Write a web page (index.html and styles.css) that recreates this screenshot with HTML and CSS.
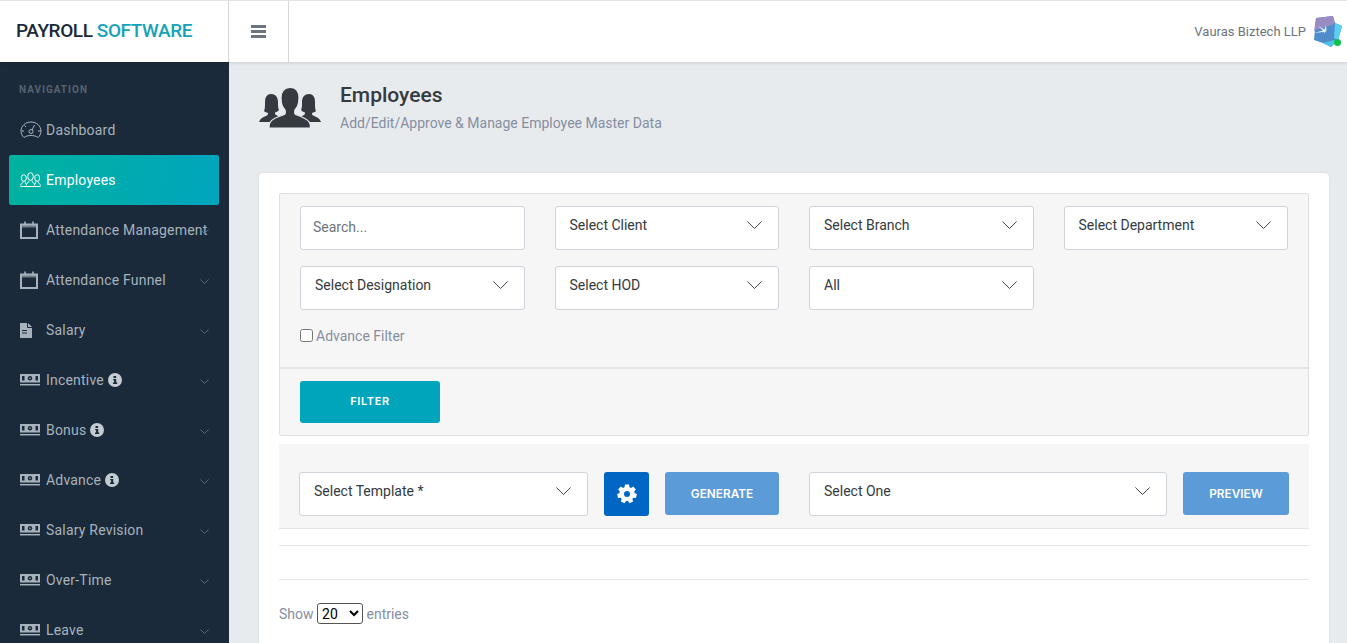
FILE: index.html
```html
<!DOCTYPE html>
<html lang="en">
<head>
    <meta charset="UTF-8">
    <meta name="viewport" content="width=device-width, initial-scale=1.0">
    <title>Employees - Payroll Software</title>
    <link rel="stylesheet" href="styles.css">
</head>
<body>
    <svg class="defs" width="0" height="0">
        <symbol id="i-cal" viewBox="0 0 18 18">
            <path d="M1 3.500h16V17H1z" fill="none" stroke="currentColor" stroke-width="2"/>
            <path d="M1 3h16v3.500H1z" fill="currentColor" opacity=".6"/>
            <path d="M5 .5v4M13 .5v4" stroke="currentColor" stroke-width="1.600"/>
        </symbol>
        <symbol id="i-money" viewBox="0 0 20 12">
            <path d="M0 0h20v8.500H0z" fill="currentColor"/>
            <path d="M2 2h2.500v4.500H2zM15.500 2H18v4.500h-2.500z" fill="#1a2a3a"/>
            <circle cx="10" cy="4.300" r="2.200" fill="#1a2a3a"/>
            <circle cx="10" cy="4.300" r=".8" fill="currentColor"/>
            <path d="M0 10.700h20" stroke="currentColor" stroke-width="1.500"/>
        </symbol>
        <symbol id="i-info" viewBox="0 0 14 14">
            <circle cx="7" cy="7" r="7" fill="currentColor"/>
            <path d="M5.500 3h2.600v2H5.500zM5.200 6h3v3.600h1V11H5V9.600h1.100V7.300h-.9z" fill="#1a2a3a"/>
        </symbol>
        <symbol id="i-chev" viewBox="0 0 9 5">
            <path d="M.5 .5 4.500 4.500 8.500 .5" fill="none" stroke="currentColor" stroke-width="1"/>
        </symbol>
        <symbol id="i-caret" viewBox="0 0 15 8">
            <path d="M.4 .5 7.500 7.500 14.600 .5" fill="none" stroke="currentColor" stroke-width="1"/>
        </symbol>
    </svg>

    <header class="topbar">
        <div class="brand">PAYROLL <span>SOFTWARE</span></div>
        <div class="toggle">
            <svg width="15" height="13" viewBox="0 0 15 13"><path d="M0 0h15v3H0zM0 5h15v3H0zM0 10h15v3H0z" fill="#6c757d"/></svg>
        </div>
        <div class="user">
            <span>Vauras Biztech LLP</span>
            <div class="avatar">
                <svg width="29" height="32" viewBox="0 0 29 32">
                    <path d="M3 2 20 0l2 7 7 3-4 14-7 7-8-4-9-3z" fill="#4f8ccb"/>
                    <path d="M3 2 20 0l1.500 8L3 14 1 15z" fill="#9a8cc2"/>
                    <path d="M22 7l7 3-4 14-4-2z" fill="#58d0f2"/>
                    <path d="M1 24l9 3 15-4-7 8-8-4z" fill="#4fc3ec"/>
                    <path d="M1 17l9-2.500L5 10l6.500 3.500L13 9l.5 5.500-2 2.500-1-1z" fill="#e3eef8"/>
                </svg>
                <i class="online"></i>
            </div>
        </div>
    </header>

    <div class="layout">
        <aside class="sidebar">
            <div class="nav-title">NAVIGATION</div>
            <ul class="nav">
                <li>
                    <svg class="nav-icon" width="22" height="18" viewBox="0 0 22 18" fill="none" stroke="currentColor" stroke-width="1">
                        <path d="M4 16.500C2 15 1 12 1 10 1 5 5.500 1 11 1s10 4 10 9c0 2-1 5-3 6.500-2-1.500-4.500-2-7-2s-5 .5-7 2z"/>
                        <circle cx="11" cy="10.500" r="2"/>
                        <path d="M12 9 14.500 4M1.500 10H4M18 10h3M4.500 4.500 6 6"/>
                    </svg>
                    Dashboard
                </li>
                <li class="active">
                    <svg class="nav-icon" width="21" height="16" viewBox="0 0 21 16" fill="none" stroke="currentColor" stroke-width="1">
                        <ellipse cx="10.500" cy="4.500" rx="2.800" ry="3.800"/>
                        <path d="M9 8.500c0 2-2.500 2.500-3 5M12 8.500c0 2 2.500 2.500 3 5"/>
                        <ellipse cx="3.800" cy="6" rx="2.500" ry="3.300"/>
                        <path d="M3 9.500c0 1.500-2 2-2.500 4M5 9.500c0 1 .8 1.500 1.200 2.500"/>
                        <ellipse cx="17.200" cy="6" rx="2.500" ry="3.300"/>
                        <path d="M18 9.500c0 1.500 2 2 2.500 4M16 9.500c0 1-.8 1.500-1.200 2.500"/>
                        <path d="M.5 14.500h20"/>
                    </svg>
                    Employees
                </li>
                <li>
                    <svg class="nav-icon" width="18" height="18"><use href="#i-cal"/></svg>
                    Attendance Management
                    <svg class="chev" width="9" height="5"><use href="#i-chev"/></svg>
                </li>
                <li>
                    <svg class="nav-icon" width="18" height="18"><use href="#i-cal"/></svg>
                    Attendance Funnel
                    <svg class="chev" width="9" height="5"><use href="#i-chev"/></svg>
                </li>
                <li>
                    <svg class="nav-icon" width="12" height="15" viewBox="0 0 12 15"><path d="M0 0h8l4 4v11H0z" fill="currentColor"/><path d="M7.500 0v4.500H12M2 7.500h5M2 10h5" fill="none" stroke="#1a2a3a" stroke-width="1"/></svg>
                    Salary
                    <svg class="chev" width="9" height="5"><use href="#i-chev"/></svg>
                </li>
                <li>
                    <svg class="nav-icon" width="20" height="12"><use href="#i-money"/></svg>
                    Incentive
                    <svg class="info" width="14" height="14"><use href="#i-info"/></svg>
                    <svg class="chev" width="9" height="5"><use href="#i-chev"/></svg>
                </li>
                <li>
                    <svg class="nav-icon" width="20" height="12"><use href="#i-money"/></svg>
                    Bonus
                    <svg class="info" width="14" height="14"><use href="#i-info"/></svg>
                    <svg class="chev" width="9" height="5"><use href="#i-chev"/></svg>
                </li>
                <li>
                    <svg class="nav-icon" width="20" height="12"><use href="#i-money"/></svg>
                    Advance
                    <svg class="info" width="14" height="14"><use href="#i-info"/></svg>
                    <svg class="chev" width="9" height="5"><use href="#i-chev"/></svg>
                </li>
                <li>
                    <svg class="nav-icon" width="20" height="12"><use href="#i-money"/></svg>
                    Salary Revision
                    <svg class="chev" width="9" height="5"><use href="#i-chev"/></svg>
                </li>
                <li>
                    <svg class="nav-icon" width="20" height="12"><use href="#i-money"/></svg>
                    Over-Time
                    <svg class="chev" width="9" height="5"><use href="#i-chev"/></svg>
                </li>
                <li>
                    <svg class="nav-icon" width="20" height="12"><use href="#i-money"/></svg>
                    Leave
                    <svg class="chev" width="9" height="5"><use href="#i-chev"/></svg>
                </li>
            </ul>
        </aside>

        <main class="content">
            <div class="page-head">
                <svg class="page-icon" width="62" height="41" viewBox="0 0 62 41" fill="#343a40">
                    <path d="M12 7c4.500 0 7 3 7 8 0 4 0 6 1 8-1 1-2 2-4 2.500 0 1 .2 2 1 2.500L21 30 11 35H0c1-3.500 4-5 8-6.500.8-.8 1-1.500 1-2.500-1.500-.5-3-1-4-2 1-2 1-4 1-9 0-5 2-8 6-8z"/>
                    <path d="M50 7c-4.500 0-7 3-7 8 0 4 0 6-1 8 1 1 2 2 4 2.500 0 1-.2 2-1 2.500L41 30l10 5h11c-1-3.500-4-5-8-6.500-.8-.8-1-1.500-1-2.500 1.500-.5 3-1 4-2-1-2-1-4-1-9 0-5-2-8-6-8z"/>
                    <path stroke="#e8ebee" stroke-width="1.200" d="M31 .5c6 0 9 4 9 10.500 0 5-2 10-4 12-.5 2-.5 3.500.5 4.500 6 2 12 4 14 8 1 2 1 4 1 5.500H10c0-1.500 0-3.500 1-5.500 2-4 8-6 14.500-8 1-1 1-2.500.5-4.500-2-2-4-7-4-12C22 4.500 25 .5 31 .5z"/>
                </svg>
                <div>
                    <h1>Employees</h1>
                    <p>Add/Edit/Approve &amp; Manage Employee Master Data</p>
                </div>
            </div>

            <section class="card">
                <div class="filter-panel">
                    <div class="filter-body">
                        <div class="filter-grid">
                            <input class="field search" type="text" placeholder="Search...">
                            <div class="field pick">Select Client<svg width="15" height="8"><use href="#i-caret"/></svg></div>
                            <div class="field pick">Select Branch<svg width="15" height="8"><use href="#i-caret"/></svg></div>
                            <div class="field pick">Select Department<svg width="15" height="8"><use href="#i-caret"/></svg></div>
                            <div class="field pick">Select Designation<svg width="15" height="8"><use href="#i-caret"/></svg></div>
                            <div class="field pick">Select HOD<svg width="15" height="8"><use href="#i-caret"/></svg></div>
                            <div class="field pick">All<svg width="15" height="8"><use href="#i-caret"/></svg></div>
                        </div>
                        <label class="advance"><input type="checkbox"> Advance Filter</label>
                    </div>
                    <div class="filter-foot">
                        <button class="btn btn-filter">FILTER</button>
                    </div>
                </div>

                <div class="template-bar">
                    <div class="field pick tpl">Select Template *<svg width="15" height="8"><use href="#i-caret"/></svg></div>
                    <button class="btn btn-gear">
                        <svg width="20" height="20" viewBox="0 0 20 20"><path fill="#fff" fill-rule="evenodd" d="M8 .6h4l.5 2.600 1.500.7 2.300-1.400 2.600 3-1.700 2 .3 1.500 2.400 1-.9 3.900-2.600-.1-1 1.300.7 2.500-3.600 1.700-1.400-2.200H9l-1.500 2.200-3.600-1.700.7-2.500-1-1.300-2.600.1L.1 10l2.400-1 .3-1.500-1.700-2 2.600-3 2.300 1.400 1.500-.7zM10 7a3 3 0 1 0 0 6 3 3 0 0 0 0-6z"/></svg>
                    </button>
                    <button class="btn btn-action btn-generate">GENERATE</button>
                    <div class="field pick one">Select One<svg width="15" height="8"><use href="#i-caret"/></svg></div>
                    <button class="btn btn-action btn-preview">PREVIEW</button>
                </div>

                <hr class="rule rule-a">
                <hr class="rule rule-b">

                <div class="length">
                    Show
                    <select class="length-select"><option>20</option><option>50</option><option>100</option></select>
                    entries
                </div>
            </section>
        </main>
    </div>
</body>
</html>
```
FILE: styles.css
```css
* {
    box-sizing: border-box;
}
html, body {
    height: 100%;
    margin: 0;
    overflow: hidden;
}
body {
    font-family: Roboto, "Liberation Sans", sans-serif;
    font-size: 14px;
    color: #343a40;
    background-color: #e8ebee;
}
.defs {
    position: absolute;
}

/* top bar */
.topbar {
    display: flex;
    height: 62px;
    background-color: #fff;
    border-top: 1px solid #e3e3e3;
    box-shadow: 0 1px 4px rgba(0, 0, 0, 0.12);
    position: relative;
    z-index: 2;
}
.brand {
    width: 229px;
    padding: 0 0 0 16px;
    border-right: 1px solid #d6d6d6;
    font-size: 19px;
    font-weight: 500;
    line-height: 60px;
    letter-spacing: -0.42px;
    color: #1a2a3a;
}
.brand span {
    color: #14a3b8;
}
.toggle {
    display: flex;
    align-items: center;
    justify-content: center;
    width: 60px;
    border-right: 1px solid #d6d6d6;
}
.user {
    display: flex;
    align-items: center;
    gap: 7px;
    margin-left: auto;
    padding-right: 5px;
    font-size: 13px;
    color: #6c757d;
}
.avatar {
    position: relative;
    width: 29px;
    height: 32px;
}
.online {
    position: absolute;
    right: 1px;
    bottom: 2px;
    width: 7px;
    height: 7px;
    border-radius: 50%;
    background-color: #0cc24c;
}

/* sidebar */
.layout {
    display: flex;
    height: 581px;
}
.sidebar {
    flex: 0 0 229px;
    padding-top: 21px;
    overflow: hidden;
    background-color: #1a2a3a;
}
.nav-title {
    padding-left: 19px;
    height: 22px;
    font-size: 10px;
    font-weight: 700;
    line-height: 13px;
    letter-spacing: 1px;
    color: #56636f;
}
.nav {
    margin: 0;
    padding: 0 10px 0 9px;
    list-style: none;
}
.nav li {
    position: relative;
    display: grid;
    grid-template-columns: 26px auto auto;
    justify-content: start;
    align-items: center;
    height: 50px;
    padding-left: 11px;
    color: #a8b2bc;
    letter-spacing: 0.2px;
    white-space: nowrap;
}
.nav li.active {
    color: #fff;
    border-radius: 2px;
    background: linear-gradient(100deg, #00b29f, #00a5bd);
}
.info {
    margin-left: 4px;
    color: #c4cbd2;
}
.chev {
    position: absolute;
    right: 10px;
    top: 24px;
    color: #5a6875;
}

/* page head */
.content {
    flex: 1;
    padding: 0 18px 0 30px;
}
.page-head {
    display: flex;
    height: 111px;
    padding-top: 25px;
}
.page-icon {
    flex: none;
    margin-right: 19px;
}
.page-head h1 {
    margin: 0;
    font-size: 21px;
    font-weight: 500;
    line-height: 16px;
    color: #343a40;
}
.page-head p {
    margin: 12px 0 0;
    color: #868e9f;
    line-height: 16px;
}

/* card */
.card {
    height: 480px;
    padding: 20px;
    border-radius: 4px;
    background-color: #fff;
    box-shadow: 0 0 3px rgba(0, 0, 0, 0.08);
}
.filter-panel {
    height: 243px;
    border: 1px solid #dfdfdf;
    border-radius: 2px;
    background-color: #f6f6f6;
}
.filter-body {
    height: 175px;
    padding: 12px 20px 0;
    border-bottom: 2px solid #e2e4e6;
}
.filter-grid {
    display: grid;
    grid-template-columns: repeat(4, 1fr);
    gap: 16px 30px;
}
.field {
    height: 44px;
    border: 1px solid #ced4da;
    border-radius: 3px;
    background-color: #fff;
    font-family: inherit;
    font-size: 14px;
    color: #343a40;
}
.search {
    width: 100%;
    padding: 0 12px 2px;
    outline: none;
}
.search::placeholder {
    color: #6c757d;
    opacity: 1;
}
.pick {
    display: flex;
    align-items: center;
    justify-content: space-between;
    padding: 0 16px 6px 14px;
}
.pick svg {
    flex: none;
    color: #444;
}
.advance {
    display: flex;
    align-items: center;
    gap: 3px;
    margin-top: 18px;
    color: #868e9f;
}
.advance input {
    width: 13px;
    height: 13px;
    margin: 0;
    position: relative;
    top: -1px;
}
.filter-foot {
    padding: 12px 20px;
}
.btn {
    border: none;
    border-radius: 3px;
    font-family: Inter, Roboto, sans-serif;
    font-size: 11px;
    font-weight: 600;
    color: #fff;
}
.btn-filter {
    display: block;
    width: 140px;
    height: 42px;
    padding-bottom: 3px;
    letter-spacing: 0.6px;
    background-color: #00a5bb;
}
.template-bar {
    display: flex;
    align-items: flex-start;
    height: 85px;
    margin-top: 8px;
    padding: 28px 20px 0;
    border-bottom: 1px solid #e2e4e6;
    background-color: #f6f6f6;
}
.tpl {
    width: 289px;
    margin-right: 16px;
}
.btn-gear {
    display: flex;
    align-items: center;
    justify-content: center;
    width: 45px;
    height: 44px;
    margin-right: 16px;
    padding: 0;
    background-color: #0066c4;
}
.btn-action {
    height: 43px;
    background-color: #5b9bd8;
    font-size: 11.800px;
}
.btn-generate {
    width: 114px;
    margin-right: 30px;
}
.one {
    width: 358px;
    margin-right: 16px;
}
.btn-preview {
    width: 106px;
}
.rule {
    height: 1px;
    margin: 0;
    border: none;
    background-color: #e6e7e8;
}
.rule-a {
    margin-top: 16px;
}
.rule-b {
    margin-top: 33px;
}
.length {
    margin-top: 23px;
    color: #868e9f;
}
.length-select {
    width: 46px;
    height: 21px;
    font-family: Roboto, sans-serif;
    font-size: 14px;
    color: #000;
    background-color: #fff;
    border: 1px solid #555;
    border-radius: 3px;
}
```
